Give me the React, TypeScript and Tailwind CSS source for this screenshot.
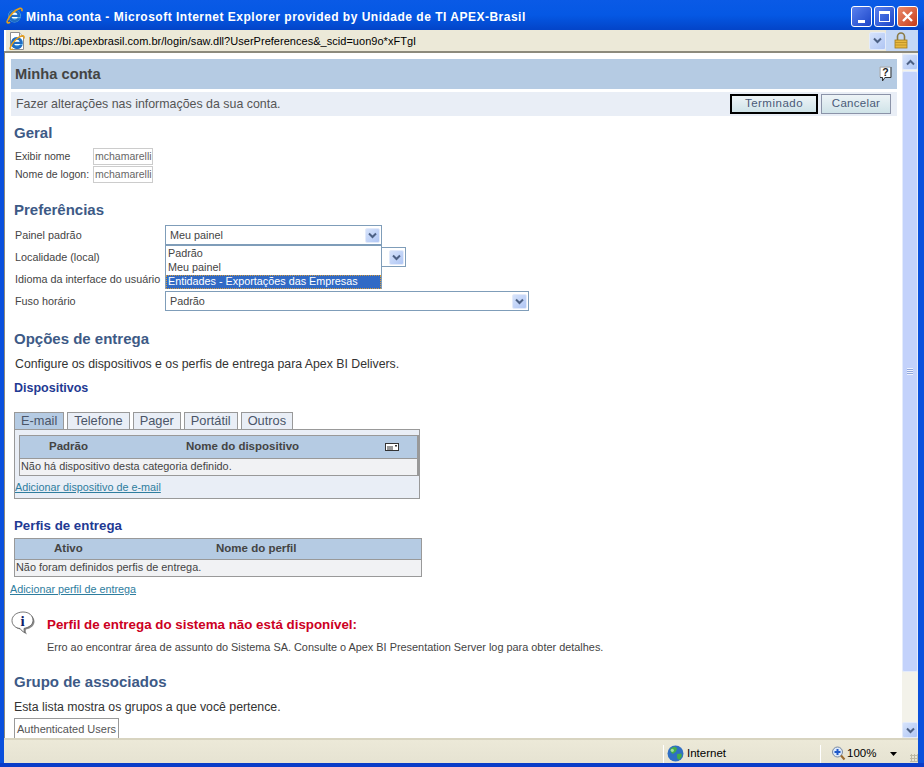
import React from "react";

const Chevron = ({ up = false, color = "#4d6185" }: { up?: boolean; color?: string }) => (
  <svg width="9" height="7" viewBox="0 0 9 7" style={{ transform: up ? "rotate(180deg)" : undefined }}>
    <path d="M1 1.5 L4.5 5 L8 1.5" fill="none" stroke={color} strokeWidth="2" />
  </svg>
);

const ComboBtn = ({ cls = "w-[15px] h-[15px]" }: { cls?: string }) => (
  <div className={`${cls} rounded-[2px] border border-[#e3ebfb] bg-gradient-to-br from-[#d6e3fb] to-[#b0c6f4] flex items-center justify-center`}>
    <Chevron />
  </div>
);

const Select = ({ w, text }: { w: string; text: string }) => (
  <div className={`${w} h-[20px] bg-white border border-[#7f9db9] flex items-center justify-between pl-[4px] pr-[1px] text-[10.800px] text-[#444]`}>
    <span>{text}</span>
    <ComboBtn />
  </div>
);

const IeGlyph = () => (
  <>
    <circle cx="8" cy="8.500" r="6" fill="#5fb4ea" />
    <path d="M8 2.700a5.800 5.800 0 1 0 5.400 7.800h-2.900a2.900 2.900 0 0 1-5.200-1.100h8.300A5.800 5.800 0 0 0 8 2.700zM5.300 7.300a2.800 2.800 0 0 1 5.400 0z" fill="#1f6cc4" />
    <path d="M5.300 7.300a2.800 2.800 0 0 1 5.400 0z" fill="#ffffff" />
    <path d="M5.300 9.400h5.700a2.900 2.900 0 0 1-.5 1.100h-4.400z" fill="#ffffff" />
    <path d="M1.300 13C3 8 8.500 2.500 13 1.300c1.800-.4 2.500.8 1.800 2.800" fill="none" stroke="#e89f18" strokeWidth="1.500" />
    <path d="M1.300 13c-.7 2 .5 2.500 2.600 1.300" fill="none" stroke="#e89f18" strokeWidth="1.500" />
  </>
);

const IeIcon = ({ size = 16 }: { size?: number }) => (
  <svg width={size} height={size} viewBox="0 0 16 16"><IeGlyph /></svg>
);

const PageIeIcon = () => (
  <svg width="16" height="18" viewBox="0 0 16 18">
    <path d="M1.500.5h9l4 4v13h-13z" fill="#fff" stroke="#8e8e8e" />
    <path d="M10.500.5v4h4" fill="#e8e8e8" stroke="#8e8e8e" />
    <g transform="translate(0 2.500)"><IeGlyph /></g>
  </svg>
);

const Heading = ({ children, cls }: { children: React.ReactNode; cls: string }) => (
  <div className={`text-[15px] leading-[16px] font-bold text-[#3d5a86] ${cls}`}>{children}</div>
);

const Tab = ({ label, active }: { label: string; active?: boolean }) => (
  <div className={`h-[17px] border border-b-0 border-[#999] px-[6px] flex items-center text-[12.800px] text-[#4a5568] ${active ? "bg-[#b5cbe3]" : "bg-[#e9eef6]"}`}>{label}</div>
);

const Row = ({ label, h, children }: { label: string; h: string; children?: React.ReactNode }) => (
  <div className={`flex items-center ${h}`}>
    <div className="w-[150px] text-[10.800px] text-[#444] shrink-0 whitespace-nowrap">{label}</div>
    {children}
  </div>
);

export default function App() {
  return (
    <div className="w-[924px] h-[767px] overflow-hidden flex flex-col bg-[#0a50dc]" style={{ fontFamily: '"Liberation Sans", Arial, sans-serif' }}>
      {/* Title bar */}
      <div className="h-[30px] shrink-0 flex items-center pl-[6px] pr-[6px] bg-gradient-to-b from-[#0a5ae6] via-[#0558e4] to-[#0344c8]">
        <IeIcon size={17} />
        <div className="ml-[3px] text-[12px] font-bold text-white tracking-[0.5px] whitespace-nowrap mt-[3px]">Minha conta - Microsoft Internet Explorer provided by Unidade de TI APEX-Brasil</div>
        <div className="ml-auto flex gap-[2px] mt-[2px]">
          <div className="w-[21px] h-[21px] rounded-[3px] border border-white bg-gradient-to-br from-[#5a80ee] to-[#1c44c8] flex items-end justify-center pb-[3px]"><div className="w-[7px] h-[3px] bg-white" /></div>
          <div className="w-[21px] h-[21px] rounded-[3px] border border-white bg-gradient-to-br from-[#5a80ee] to-[#1c44c8] flex items-center justify-center"><div className="w-[11px] h-[11px] border border-white border-t-[3px]" /></div>
          <div className="w-[21px] h-[21px] rounded-[3px] border border-white bg-gradient-to-br from-[#ea8a6a] to-[#c63a14] flex items-center justify-center">
            <svg width="13" height="13" viewBox="0 0 13 13"><path d="M2 2 L11 11 M11 2 L2 11" stroke="#fff" strokeWidth="2.400" /></svg>
          </div>
        </div>
      </div>

      {/* Main frame */}
      <div className="flex-1 min-h-0 flex flex-col ml-[4px] mr-[6px] bg-[#ece9d8]">
        {/* Address */}
        <div className="h-[21px] shrink-0 flex items-center bg-[#ece9d8] border-l-2 border-white">
          <div className="pl-[3px] pr-[4px] pt-[1px]"><PageIeIcon /></div>
          <div className="flex-1 text-[11px] tracking-[0.03px] text-black whitespace-nowrap pt-[2px]">https://bi.apexbrasil.com.br/login/saw.dll?UserPreferences&amp;_scid=uon9o*xFTgI</div>
          <ComboBtn cls="w-[17px] h-[18px]" />
          <div className="w-[32px] h-[21px] bg-[#c5d8f6] flex items-center pl-[8px]">
            <svg width="14" height="17" viewBox="0 0 14 17"><path d="M3.500 8V4.500a3.500 3.500 0 0 1 7 0V8" fill="none" stroke="#8a7a45" strokeWidth="1.600" /><rect x="1" y="8" width="12" height="8" fill="#e8b83e" stroke="#a07c1c" strokeWidth=".8" /><path d="M1 10.500h12M1 13h12" stroke="#b88d24" strokeWidth=".8" /></svg>
          </div>
        </div>

        <div className="flex-1 min-h-0 flex border-t-2 border-l-[1px] border-[#8c8a7c] bg-white">
          {/* Page */}
          <div className="relative flex-1 min-w-0 overflow-hidden bg-white pl-[6px] pr-[5px] pt-[6px] text-[#444]">
            <div className="h-[30px] bg-[#b5cbe3] flex items-center justify-between pl-[4px] pr-[5px]">
              <span className="text-[14.700px] font-bold text-[#444]">Minha conta</span>
              <svg width="13" height="16" viewBox="0 0 13 16"><path d="M1.500 1.500h10v9.500h-6l-2 3v-3h-2z" fill="#fff" /><path d="M1 1h10.500M1 1v10" stroke="#aaa" /><path d="M12 1v10.500H6l-2.500 3.500v-3.500H1" fill="none" stroke="#333" /><text x="6.500" y="10" fontSize="10.500" fontWeight="700" textAnchor="middle" fill="#222" fontFamily="Liberation Sans">?</text></svg>
            </div>
            <div className="mt-[3px] h-[24px] bg-[#e9eef6] flex items-center justify-between pl-[5px] pr-[6px]">
              <span className="text-[12.400px] text-[#555]">Fazer alterações nas informações da sua conta.</span>
              <div className="flex gap-[3px] items-center">
                <div className="w-[88px] h-[20px] border-2 border-black bg-gradient-to-b from-[#eef4f7] to-[#cfe3e8] flex items-center justify-center text-[11.500px] text-[#4a5a78] tracking-[0.5px]">Terminado</div>
                <div className="w-[70px] h-[20px] border border-[#8b93a8] bg-gradient-to-b from-[#eef4f7] to-[#cfe3e8] flex items-center justify-center text-[11.500px] text-[#4a5a78] tracking-[0.3px]">Cancelar</div>
              </div>
            </div>

            <div className="pl-[3px]">
              <Heading cls="mt-[9px]">Geral</Heading>
              <div className="mt-[7px] ml-[1px] flex flex-col gap-[1px]">
                <div className="flex items-center h-[17px]">
                  <div className="w-[78px] text-[10.500px] text-[#444] whitespace-nowrap">Exibir nome</div>
                  <div className="w-[60px] h-[17px] border border-[#ccc] text-[10.500px] text-[#666] flex items-center pl-[1px] overflow-hidden">mchamarelli</div>
                </div>
                <div className="flex items-center h-[17px]">
                  <div className="w-[78px] text-[10.500px] text-[#444] whitespace-nowrap">Nome de logon:</div>
                  <div className="w-[60px] h-[17px] border border-[#ccc] text-[10.500px] text-[#666] flex items-center pl-[1px] overflow-hidden">mchamarelli</div>
                </div>
              </div>

              <Heading cls="mt-[19px]">Preferências</Heading>
              <div className="mt-[7px] ml-[1px]">
                <Row label="Painel padrão" h="h-[20px]"><Select w="w-[217px]" text="Meu painel" /></Row>
                <div className="relative">
                  <Row label="Localidade (local)" h="h-[24px]"><Select w="w-[241px]" text="" /></Row>
                  <div className="absolute left-[150px] top-0 z-10 w-[217px] h-[44px] bg-white border border-[#7f9db9] pt-px text-[10.800px] leading-[12px] text-[#444]">
                    <div className="h-[14px] pl-[2px]">Padrão</div>
                    <div className="h-[14px] pl-[2px]">Meu painel</div>
                    <div className="h-[14px] pl-[2px] bg-[#316ac5] text-white outline-1 outline-dotted outline-[#d59b3a] -outline-offset-1">Entidades - Exportações das Empresas</div>
                  </div>
                </div>
                <Row label="Idioma da interface do usuário" h="h-[20px]" />
                <Row label="Fuso horário" h="h-[24px]"><Select w="w-[364px]" text="Padrão" /></Row>
              </div>

              <Heading cls="mt-[18px]">Opções de entrega</Heading>
              <div className="mt-[10px] ml-[1px] text-[12.300px] leading-[14px] text-[#333]">Configure os dispositivos e os perfis de entrega para Apex BI Delivers.</div>
              <div className="mt-[10px] text-[12.500px] leading-[14px] font-bold text-[#1f3a93]">Dispositivos</div>

              <div className="mt-[17px] flex gap-[3px]">
                <Tab label="E-mail" active />
                <Tab label="Telefone" />
                <Tab label="Pager" />
                <Tab label="Portátil" />
                <Tab label="Outros" />
              </div>
              <div className="w-[406px] h-[70px] bg-[#e9eef6] border border-[#999] pt-[5px] pl-[4px]">
                <div className="border border-[#999] bg-[#f1f2f4] border-r-2">
                  <div className="h-[23px] bg-[#b5cbe3] border-b border-[#999] relative flex items-center text-[11.500px] font-bold text-[#444]">
                    <span className="ml-[29px] w-[137px]">Padrão</span>
                    <span>Nome do dispositivo</span>
                    <svg className="absolute right-[18px] top-[7px]" width="14" height="8" viewBox="0 0 14 8"><rect x=".5" y=".5" width="13" height="7" fill="#fff" stroke="#333" /><path d="M2 4h6M2 6h6" stroke="#333" /><rect x="10" y="2" width="2" height="1.500" fill="#333" /></svg>
                  </div>
                  <div className="h-[16px] text-[10.900px] leading-[15px] pl-[1px] text-[#444] whitespace-nowrap">Não há dispositivo desta categoria definido.</div>
                </div>
                <a className="block -ml-[4px] mt-[5px] text-[10.800px] leading-[13px] text-[#2e7d9e] underline">Adicionar dispositivo de e-mail</a>
              </div>

              <div className="mt-[20px] text-[13.300px] leading-[14px] font-bold text-[#1f3a93]">Perfis de entrega</div>
              <div className="mt-[5px] w-[408px] border border-[#999] bg-[#f1f2f4]">
                <div className="h-[21px] bg-[#b5cbe3] border-b border-[#999] flex items-center text-[11.500px] font-bold text-[#444]">
                  <span className="ml-[39px] w-[162px]">Ativo</span>
                  <span>Nome do perfil</span>
                </div>
                <div className="h-[16px] text-[10.900px] leading-[15px] pl-[1px] text-[#444] whitespace-nowrap">Não foram definidos perfis de entrega.</div>
              </div>
            </div>

            <a className="block -ml-[1px] mt-[6px] text-[10.800px] leading-[13px] text-[#2e7d9e] underline">Adicionar perfil de entrega</a>

            <div className="flex mt-[15px]">
              <svg width="25" height="25" viewBox="0 0 25 25">
                <path d="M12.500 2C6.500 2 2 5.500 2 10.500c0 4.500 3.500 7.500 8 8 1 1.500 2.500 3.500 6 5-1.200-2-1.500-3.500-1-5 5-1 8.500-4 8.500-8C23.500 5.500 18.500 2 12.500 2z" fill="#8a8a8a" />
                <path d="M12 1C6 1 1 4.500 1 9.500c0 4.500 3.500 7.500 8 8 1 1.500 2.500 3 5 4-1-1.500-1.200-3-.8-4.200 5-.8 8.800-3.800 8.800-7.800C22 4.500 18 1 12 1z" fill="#fff" stroke="#555" strokeWidth=".8" />
                <text x="11.500" y="14.500" fontSize="15" fontWeight="700" textAnchor="middle" fill="#10206a" fontFamily="Liberation Serif">i</text>
              </svg>
              <div className="ml-[11px]">
                <div className="mt-[6px] text-[13.350px] leading-[16px] font-bold text-[#cc0022] whitespace-nowrap">Perfil de entrega do sistema não está disponível:</div>
                <div className="mt-[8px] text-[10.900px] leading-[13px] text-[#444] whitespace-nowrap">Erro ao encontrar área de assunto do Sistema SA. Consulte o Apex BI Presentation Server log para obter detalhes.</div>
              </div>
            </div>

            <div className="pl-[3px]">
              <Heading cls="mt-[20px]">Grupo de associados</Heading>
              <div className="mt-[10px] text-[12.300px] leading-[14px] text-[#333]">Esta lista mostra os grupos a que você pertence.</div>
              <div className="mt-[4px] w-[105px] h-[24px] border border-[#999] text-[11px] text-[#555] flex items-start pt-[2px] pl-[2px] whitespace-nowrap">Authenticated Users</div>
            </div>
          </div>

          {/* Scrollbar */}
          <div className="w-[16px] shrink-0 flex flex-col bg-[#f3f2ea] pt-[1px]">
            <div className="h-[16px] rounded-[2px] border border-[#e3ebfb] bg-gradient-to-br from-[#d6e3fb] to-[#b0c6f4] flex items-center justify-center"><Chevron up /></div>
            <div className="mt-[1px] h-[601px] rounded-[2px] border border-[#e3ebfb] bg-[#c3d2fb] flex items-center justify-center">
              <div className="w-[6px] h-[7px] bg-[repeating-linear-gradient(#eef2fe_0_1px,#8fa6dc_1px_2px)]" />
            </div>
            <div className="flex-1" />
            <div className="h-[16px] rounded-[2px] border border-[#e3ebfb] bg-gradient-to-br from-[#d6e3fb] to-[#b0c6f4] flex items-center justify-center"><Chevron /></div>
          </div>
        </div>

        {/* Status bar */}
        <div className="h-[25px] shrink-0 border-t-2 border-[#d8d4c0] bg-gradient-to-b from-[#ece9d8] to-[#e6e3d2] flex items-center pt-[4px] text-[11.500px] text-black">
          <div className="flex-1" />
          <div className="w-[157px] h-[18px] border-l border-white flex items-center pl-[3px] gap-[3px]">
            <svg width="17" height="17" viewBox="0 0 16 16"><circle cx="8" cy="8" r="7.500" fill="#2f6fc4" /><path d="M3 3.500l4-2 2.500 1.500-1 3-3 2.500-2-2zM9.500 8.500l4-.5.500 2.500-2.500 3.500-2 -1.500z" fill="#45ad4a" /><circle cx="5" cy="5" r="1.500" fill="#9ee0a0" /></svg>
            <span>Internet</span>
          </div>
          <div className="w-[90px] h-[18px] border-l border-white flex items-center pl-[10px] gap-[1px] relative">
            <svg width="15" height="15" viewBox="0 0 14 15"><circle cx="6" cy="6" r="5" fill="#dbe8fa" stroke="#7a8aa0" /><path d="M6 3v6M3 6h6" stroke="#1e58c8" strokeWidth="2" /><path d="M9.500 9.500l3.500 4" stroke="#9a6a30" strokeWidth="2" /></svg>
            <span>100%</span>
            <svg className="absolute left-[69px] top-[7px]" width="7" height="4" viewBox="0 0 7 4"><path d="M0 0h7L3.500 4z" fill="#000" /></svg>
          </div>
          <div className="w-[8px] self-end h-[8px] mb-[1px] bg-[radial-gradient(#bdb9a4_1px,transparent_1.200px)] bg-[length:3px_3px]" />
        </div>
      </div>
      <div className="h-[4px] shrink-0 bg-[#0a3cc8]" />
    </div>
  );
}
